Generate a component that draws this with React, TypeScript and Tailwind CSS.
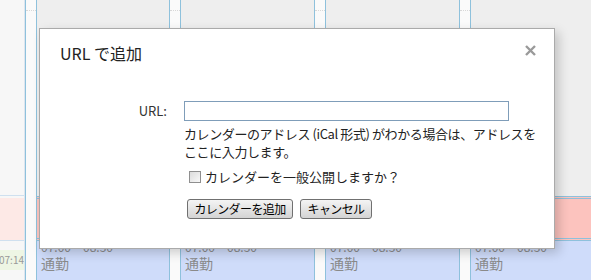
import React from 'react';

const JP = { fontFamily: '"Noto Sans CJK JP", "Liberation Sans", sans-serif' };

const Strip: React.FC = () => (
  <div className="w-[12px] shrink-0 border-x border-[#8ec1dc] bg-[#fafafa] flex flex-col">
    <div className="h-[10px]" />
    <div className="border-t border-dotted border-[#d8d8d8]" />
  </div>
);

const DayColumn: React.FC<{ width: number }> = ({ width }) => (
  <div className="shrink-0 flex flex-col" style={{ width }}>
    <div className="h-[196px] bg-[#eeeeee]" />
    <div className="h-[45px] border-y-[3px] border-double border-[#8ec1dc] bg-[#fcc3be]" />
    <div className="flex-1 bg-[#cfdcfa] px-[4px] text-[#8a8a8a]" style={JP}>
      <div className="text-[12px] leading-[10px] pt-[1px] whitespace-nowrap">07:00 ~ 08:30</div>
      <div className="text-[14px] leading-[16px] mt-[3px]">通勤</div>
    </div>
  </div>
);

export default function App() {
  return (
    <div className="relative w-[591px] h-[280px] overflow-hidden bg-white">
      {/* calendar behind */}
      <div className="flex h-full">
        <div className="w-[25px] shrink-0 bg-[#f7f7f7] border-r border-[#dde5ee] flex flex-col">
          <div className="h-[196px] border-b border-[#cfe0ef]" />
          <div className="h-[43px] bg-[#fde9e6] border-b border-[#cfe0ef] mt-[2px]" />
          <div className="mt-[9px] h-[20px] bg-[#eef6e4] flex justify-end overflow-hidden text-[10px] leading-[20px] text-[#999]" style={JP}>
            07:14
          </div>
        </div>
        <Strip />
        <DayColumn width={132} />
        <Strip />
        <DayColumn width={133} />
        <Strip />
        <DayColumn width={133} />
        <Strip />
        <DayColumn width={120} />
      </div>

      {/* dialog */}
      <div
        className="absolute left-[39px] top-[28px] w-[516px] h-[221px] bg-white border border-[#aaaaaa] shadow-[4px_4px_10px_rgba(0,0,0,0.18)] text-[#222]"
        style={JP}
      >
        <div className="flex items-start justify-between pl-[20px] pr-[18px] pt-[12px]">
          <div className="text-[16px] leading-[24px] text-[#222]">URL で追加</div>
          <svg width="11" height="11" viewBox="0 0 11 11" className="mt-[4px]">
            <path d="M1 1 L10 10 M10 1 L1 10" stroke="#9a9a9a" strokeWidth="2.4" />
          </svg>
        </div>

        <div className="flex mt-[36px]">
          <div className="w-[127px] text-right text-[13px] leading-[20px] text-[#333]">URL:</div>
          <div className="ml-[17px] flex flex-col">
            <div className="w-[325px] h-[20px] border border-[#7f9db9] bg-white" />
            <div className="mt-[4px] text-[13px] leading-[18px] text-[#222] whitespace-nowrap tracking-[-0.4px]">
              カレンダーのアドレス (iCal 形式) がわかる場合は、アドレスを
              <br />
              ここに入力します。
            </div>
            <label className="mt-[7px] ml-[5px] flex items-center gap-[4px] text-[13px] leading-[18px] text-[#222] whitespace-nowrap">
              <span className="w-[12px] h-[12px] border border-[#8f8f8f] bg-gradient-to-br from-[#dcdcdc] to-[#f8f8f8]" />
              カレンダーを一般公開しますか？
            </label>
            <div className="mt-[13px] ml-[3px] flex gap-[7px]">
              <button className="h-[20px] px-0 border border-[#707070] rounded-[3px] bg-gradient-to-b from-[#f4f4f4] to-[#d4d4d4] text-[12px] leading-[18px] tracking-[-0.6px] text-black w-[106px] whitespace-nowrap">
                カレンダーを追加
              </button>
              <button className="h-[20px] px-0 border border-[#707070] rounded-[3px] bg-gradient-to-b from-[#f4f4f4] to-[#d4d4d4] text-[12px] leading-[18px] tracking-[-0.6px] text-black w-[72px] whitespace-nowrap">
                キャンセル
              </button>
            </div>
          </div>
        </div>
      </div>
    </div>
  );
}
